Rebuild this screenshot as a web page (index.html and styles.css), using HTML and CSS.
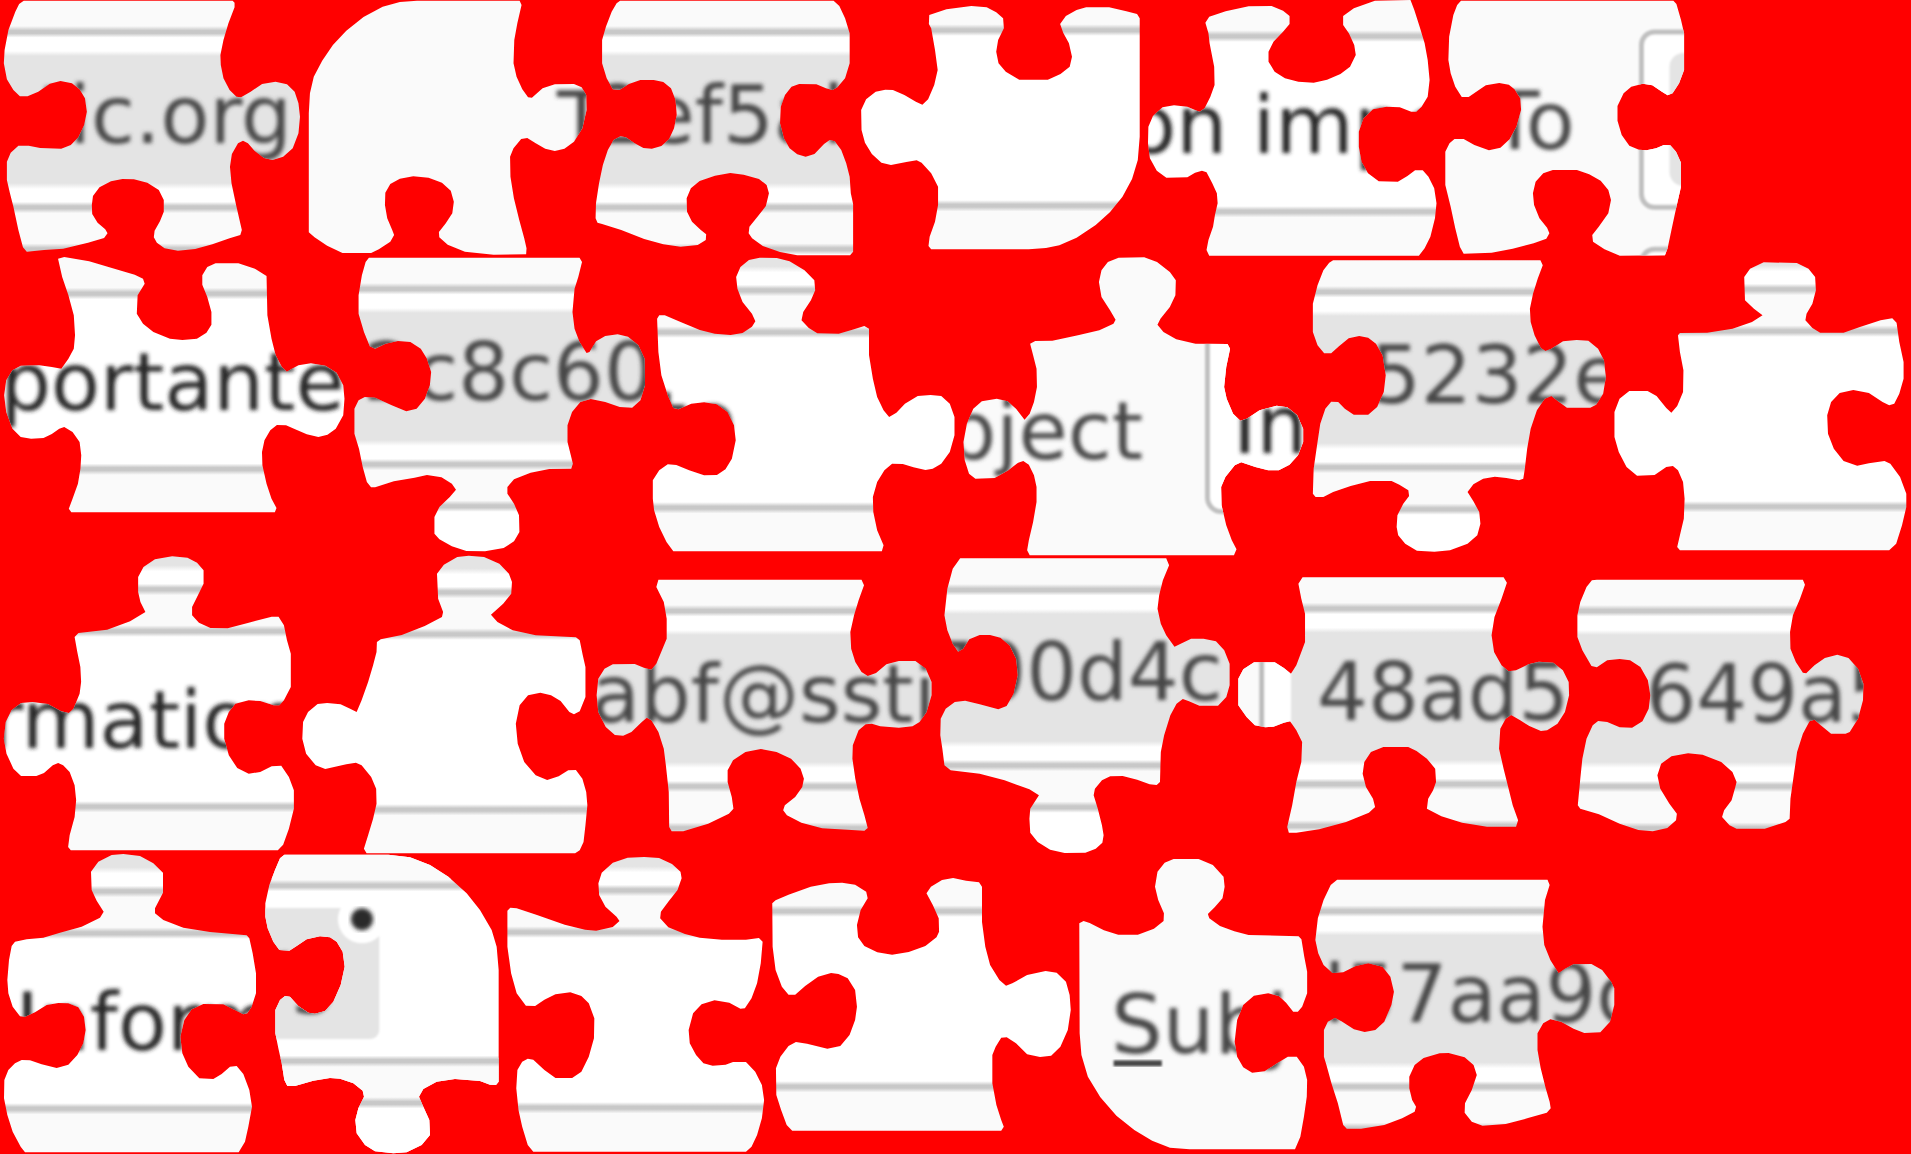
FILE: index.html
```
<!DOCTYPE html>
<html lang="en">
<head>
<meta charset="utf-8">
<title>Puzzle pieces</title>
<link rel="stylesheet" href="styles.css">
</head>
<body>
<svg class="board" width="1911" height="1154" viewBox="0 0 1911 1154">
<defs>
<filter id="soft" x="-10%" y="-10%" width="120%" height="120%"><feGaussianBlur stdDeviation="1.3"/></filter>
<filter id="softText" x="-10%" y="-10%" width="120%" height="120%"><feGaussianBlur stdDeviation="1.9"/></filter>
<linearGradient id="chipFill" gradientUnits="userSpaceOnUse" x1="0" x2="0" y1="-100" y2="300">
<stop offset=".235" stop-color="#fafafa"/><stop offset=".2465" stop-color="#c8c8c8"/><stop offset=".2535" stop-color="#c8c8c8"/><stop offset=".264" stop-color="#fff"/><stop offset=".2975" stop-color="#fff"/><stop offset=".31" stop-color="#e4e4e4"/><stop offset=".6275" stop-color="#e4e4e4"/><stop offset=".6425" stop-color="#fff"/><stop offset=".6745" stop-color="#fff"/><stop offset=".6848" stop-color="#c8c8c8"/><stop offset=".6918" stop-color="#c8c8c8"/><stop offset=".703" stop-color="#fafafa"/><stop offset=".7785" stop-color="#fafafa"/><stop offset=".7898" stop-color="#c8c8c8"/><stop offset=".7968" stop-color="#c8c8c8"/><stop offset=".807" stop-color="#fff"/>
</linearGradient>
<linearGradient id="plainFill" gradientUnits="userSpaceOnUse" x1="0" x2="0" y1="-100" y2="300">
<stop offset=".085" stop-color="#e4e4e4"/><stop offset=".1" stop-color="#fff"/><stop offset=".131" stop-color="#fff"/><stop offset=".1415" stop-color="#c8c8c8"/><stop offset=".1485" stop-color="#c8c8c8"/><stop offset=".16" stop-color="#fafafa"/><stop offset=".235" stop-color="#fafafa"/><stop offset=".2465" stop-color="#c8c8c8"/><stop offset=".2535" stop-color="#c8c8c8"/><stop offset=".264" stop-color="#fff"/><stop offset=".6745" stop-color="#fff"/><stop offset=".6848" stop-color="#c8c8c8"/><stop offset=".6918" stop-color="#c8c8c8"/><stop offset=".703" stop-color="#fafafa"/>
</linearGradient>
<rect id="chip" x="0" y="-100" width="1911" height="400" fill="url(#chipFill)"/>
<rect id="plain" x="0" y="-100" width="1911" height="400" fill="url(#plainFill)"/>

<clipPath id="a1"><polygon transform="scale(.38265 .33333)" points="62,2 608,2 613,8 613,22 597,70 584,120 576,165 577,195 584,235 600,270 618,290 630,292 655,275 685,252 720,245 750,253 770,275 780,310 784,350 780,400 765,445 740,470 712,480 690,474 665,452 648,430 635,422 622,430 606,462 601,500 605,550 617,615 626,660 632,690 628,705 600,715 555,733 510,747 465,752 430,745 410,728 402,712 404,692 418,664 428,635 428,600 415,570 385,548 350,538 320,537 290,544 260,562 243,588 240,615 241,642 255,668 275,688 281,700 272,714 230,728 165,746 115,750 70,755 60,742 48,690 35,620 26,580 18,540 18,485 28,458 48,437 75,437 105,444 160,446 185,435 205,412 220,375 227,335 222,295 208,268 188,250 158,243 130,251 100,275 72,289 52,289 35,270 18,238 10,190 12,150 22,90 40,35 50,12"/></clipPath>
<clipPath id="a2"><polygon transform="scale(.38265 .33333)" points="1090,2 1358,2 1363,15 1352,70 1344,120 1342,190 1350,230 1365,268 1380,292 1390,293 1418,265 1450,253 1500,252 1520,262 1532,285 1533,330 1522,385 1500,425 1475,446 1450,453 1425,446 1400,430 1378,414 1362,417 1342,445 1333,470 1334,530 1343,595 1357,660 1370,715 1376,745 1375,763 1290,764 1215,755 1170,734 1148,712 1147,696 1165,670 1182,640 1186,605 1178,572 1155,548 1120,533 1080,529 1045,536 1020,552 1007,578 1006,615 1012,655 1025,690 1030,705 1020,725 990,748 970,759 895,759 855,737 822,712 807,697 807,340 810,280 820,230 842,182 870,135 905,92 950,51 1000,20 1045,6"/></clipPath>
<clipPath id="a3"><polygon transform="translate(560 0) scale(.38265 .33333)" points="157,2 715,2 730,18 745,55 757,100 757,190 745,235 725,262 712,270 695,265 670,253 625,252 605,260 588,285 577,320 575,370 585,415 600,445 620,463 642,470 665,462 690,432 705,420 718,424 735,450 748,490 757,530 760,580 766,612 766,755 758,766 620,766 575,756 530,738 502,715 493,700 495,680 515,652 538,618 546,580 540,555 520,537 480,524 445,519 405,527 365,543 342,565 331,595 332,635 345,665 368,690 382,703 381,720 360,735 315,740 270,733 220,717 160,690 110,672 98,668 93,655 94,610 102,550 112,495 125,450 140,420 158,409 172,412 195,430 218,444 240,446 265,438 285,418 298,385 305,345 302,300 290,265 270,246 245,240 210,240 180,252 155,270 138,268 122,235 110,190 110,120 120,80 135,35 148,10"/></clipPath>
<clipPath id="a4"><polygon transform="translate(560 0) scale(.38265 .33333)" points="965,45 1010,28 1075,18 1115,22 1140,37 1158,55 1160,85 1145,120 1140,155 1146,190 1165,215 1200,239 1275,239 1308,222 1332,200 1338,170 1330,130 1315,98 1307,72 1322,48 1350,30 1375,22 1435,22 1480,34 1508,42 1515,55 1515,410 1510,480 1495,537 1470,590 1437,637 1400,675 1350,713 1305,736 1270,744 1225,748 970,748 963,738 966,710 980,665 988,615 988,560 970,520 945,488 932,481 905,486 865,495 840,488 815,462 797,428 788,390 787,330 800,298 825,275 850,269 870,270 900,285 930,305 947,314 962,298 978,255 987,210 980,150 970,85 964,72"/></clipPath>
<clipPath id="a5"><polygon transform="translate(1130 0) scale(.38265 .33333)" points="197,68 207,50 250,34 310,19 370,18 400,32 417,48 417,72 400,95 375,125 362,155 362,185 378,215 405,235 440,245 480,248 515,239 550,222 575,200 590,165 586,135 572,100 557,75 557,48 585,25 640,2 733,0 743,30 757,80 770,130 778,180 783,240 778,290 762,320 748,335 735,335 705,322 670,320 635,328 610,355 598,395 598,440 605,485 622,520 650,544 700,545 725,528 745,511 765,511 780,530 795,565 801,610 797,655 785,710 770,745 755,767 207,767 200,750 205,720 217,680 222,645 229,610 227,580 215,550 200,517 188,512 170,518 150,532 95,533 70,512 52,475 47,430 48,380 60,348 85,322 115,316 150,320 170,330 182,335 195,325 210,290 221,255 220,200 208,130 205,100"/></clipPath>
<clipPath id="a6"><polygon transform="translate(1130 0) scale(.38265 .33333)" points="865,2 1420,2 1428,12 1440,60 1448,100 1448,210 1435,250 1418,280 1405,286 1390,275 1365,256 1340,251 1310,260 1290,280 1274,318 1274,362 1285,405 1305,437 1330,449 1350,451 1375,445 1395,435 1412,436 1427,455 1440,488 1440,560 1428,620 1415,690 1405,745 1398,766 1280,767 1240,748 1210,725 1208,705 1225,680 1250,640 1257,600 1250,570 1230,542 1200,523 1168,510 1105,510 1080,520 1060,545 1053,580 1056,615 1070,655 1090,683 1096,700 1088,716 1055,730 1000,746 945,758 872,761 862,740 850,685 838,620 824,555 824,455 835,430 848,417 872,417 900,435 938,451 968,443 992,418 1010,380 1022,330 1020,295 1005,268 990,254 965,249 930,256 905,275 885,291 867,291 850,260 838,220 832,180 834,110 845,45 855,15"/></clipPath>
<clipPath id="b1"><polygon transform="translate(0 252) scale(.41454 .33333)" points="140,20 155,15 215,28 280,52 325,68 345,80 349,95 332,130 330,185 345,215 370,240 410,260 440,264 475,260 498,242 510,218 510,180 500,135 488,98 488,70 500,45 520,34 575,34 615,50 643,72 645,190 655,260 665,310 680,345 692,359 702,352 720,340 750,334 785,341 812,362 828,400 831,440 828,490 810,530 790,548 768,555 740,547 712,532 690,520 668,519 652,535 638,565 632,600 633,640 643,695 655,740 667,768 663,781 172,781 166,770 175,740 188,695 194,650 196,610 192,570 175,540 155,525 143,530 125,546 105,558 75,560 50,555 30,530 15,480 10,430 15,385 30,355 50,341 95,340 125,345 148,350 165,320 178,290 181,250 178,190 165,130 150,75"/></clipPath>
<clipPath id="b2"><polygon transform="translate(0 252) scale(.41454 .33333)" points="890,17 1398,17 1404,30 1395,75 1386,110 1381,180 1386,230 1398,270 1415,303 1422,300 1438,268 1460,252 1490,247 1515,254 1540,280 1555,320 1556,400 1545,445 1525,467 1495,465 1460,450 1425,441 1400,450 1380,480 1369,520 1369,570 1377,610 1382,635 1378,650 1325,651 1280,662 1240,682 1224,705 1224,725 1240,755 1252,790 1253,840 1240,868 1215,888 1170,898 1125,897 1090,883 1060,862 1048,845 1048,795 1060,765 1085,735 1100,713 1090,695 1065,676 1030,669 1000,677 950,688 905,706 895,706 885,690 875,645 866,590 855,545 855,470 865,445 880,435 905,437 945,460 980,478 1005,470 1025,440 1037,400 1040,360 1030,320 1015,290 990,270 960,267 930,275 905,290 892,283 878,240 865,185 865,130 873,70 882,30"/></clipPath>
<clipPath id="b3"><polygon transform="translate(640 252) scale(.4273 .33333)" points="40,200 45,190 58,190 95,210 140,234 175,245 212,249 240,243 262,224 270,208 262,185 240,150 228,110 225,75 235,45 255,24 280,17 320,18 350,28 385,55 408,85 410,115 400,145 382,180 378,205 395,228 415,244 465,245 495,234 525,222 536,230 536,310 545,380 555,435 570,475 583,495 600,482 620,455 650,432 680,429 705,432 725,455 736,495 736,550 725,600 705,635 685,650 668,654 640,646 615,636 590,635 572,655 555,690 545,735 546,780 555,835 570,880 566,898 78,898 62,870 45,825 33,775 30,740 30,685 45,655 65,637 85,639 115,655 150,670 180,669 200,652 215,620 224,565 220,520 205,480 180,457 150,451 120,455 90,472 78,468 65,430 50,370 43,300"/></clipPath>
<clipPath id="b4"><polygon transform="translate(640 252) scale(.4273 .33333)" points="913,275 925,267 965,266 1025,250 1075,235 1108,215 1113,203 1100,175 1080,135 1074,90 1080,55 1095,30 1120,17 1180,16 1210,30 1240,60 1254,85 1253,130 1240,165 1218,200 1211,218 1225,240 1255,262 1300,275 1375,276 1381,290 1372,345 1367,405 1373,440 1388,485 1405,506 1420,500 1450,475 1490,461 1515,466 1538,490 1552,530 1552,570 1540,610 1520,638 1495,655 1470,655 1440,645 1407,631 1392,640 1370,675 1360,705 1361,760 1372,820 1385,865 1396,892 1390,910 912,910 906,895 910,865 920,810 928,750 928,705 922,670 910,638 897,627 885,632 862,655 830,678 785,680 770,665 760,625 757,570 765,515 780,470 800,448 835,440 860,448 880,470 900,503 912,485 922,450 929,405 928,350 920,310"/></clipPath>
<clipPath id="b5"><polygon transform="translate(1300 252) scale(.38966 .33333)" points="85,25 617,25 623,40 610,80 598,125 590,170 592,210 602,250 618,288 630,297 645,290 675,268 710,264 740,266 765,290 780,325 785,375 778,425 760,458 745,467 685,467 665,450 645,432 628,440 608,475 592,530 583,590 577,650 573,680 562,685 530,678 500,674 470,680 445,697 430,720 445,748 460,780 463,815 455,850 430,875 385,895 345,899 300,896 270,875 252,850 248,825 250,790 265,755 280,732 278,715 255,698 235,687 180,687 130,702 85,720 60,735 40,735 33,725 35,650 45,570 52,515 65,470 80,449 98,450 115,470 138,488 175,488 198,465 215,420 220,370 212,310 195,275 175,257 152,252 125,259 100,283 80,304 62,304 45,280 33,240 33,155 45,100 60,55 75,32"/></clipPath>
<clipPath id="b6"><polygon transform="translate(1300 252) scale(.38966 .33333)" points="970,250 975,243 1045,242 1110,230 1160,210 1187,190 1165,170 1142,145 1140,75 1155,50 1190,31 1275,33 1305,50 1322,75 1324,115 1315,155 1300,185 1297,205 1315,228 1335,242 1395,242 1435,226 1490,205 1520,199 1531,212 1538,270 1549,330 1549,380 1538,425 1525,455 1512,460 1495,450 1460,423 1420,414 1385,423 1363,450 1353,490 1355,545 1370,590 1395,627 1430,641 1460,634 1500,627 1515,635 1540,675 1556,725 1556,765 1545,820 1530,875 1512,895 975,895 968,885 975,850 985,800 987,740 983,690 970,655 957,642 940,645 910,669 865,671 838,645 818,600 807,555 807,480 820,440 845,417 892,417 915,432 940,468 953,482 968,462 983,420 984,355 975,300"/></clipPath>
<clipPath id="c1"><polygon transform="translate(0 552) scale(.38265 .33333)" points="195,255 205,243 280,233 340,208 380,180 367,150 361,120 361,75 375,45 405,22 450,13 490,17 515,32 532,55 532,95 515,135 502,165 502,190 520,212 550,228 595,229 650,212 710,194 728,194 742,220 750,265 760,305 760,405 742,445 730,460 715,460 680,447 650,445 615,455 598,480 586,515 586,560 598,610 620,648 650,665 680,660 710,643 735,641 755,675 768,715 768,770 755,830 740,878 726,895 185,895 178,885 182,850 195,795 199,745 195,700 182,660 165,640 152,633 138,640 115,663 95,672 55,672 35,650 17,605 10,560 15,510 30,475 55,453 85,450 125,456 160,478 180,483 192,470 208,425 212,390 210,345 202,300"/></clipPath>
<clipPath id="c2"><polygon transform="translate(0 552) scale(.38265 .33333)" points="985,270 995,262 1050,249 1110,222 1155,195 1158,180 1145,140 1142,65 1160,38 1195,15 1225,11 1265,15 1305,35 1330,65 1338,90 1336,125 1315,155 1283,188 1300,210 1340,235 1400,250 1505,256 1515,265 1523,310 1530,345 1530,435 1515,478 1500,487 1488,480 1465,447 1440,430 1412,422 1380,430 1358,460 1348,515 1353,575 1370,630 1400,670 1430,684 1460,673 1485,655 1505,654 1522,680 1532,720 1535,760 1530,820 1525,870 1515,895 1503,904 958,904 951,890 962,850 975,800 984,755 983,710 970,675 945,640 930,632 905,637 850,651 825,640 800,605 790,560 792,510 805,480 830,456 855,453 890,457 915,470 932,480 945,445 962,390 975,340 984,300"/></clipPath>
<clipPath id="c3"><polygon transform="translate(590 552) scale(.41454 .33333)" points="165,83 655,83 661,100 648,145 637,190 628,240 630,290 640,330 655,360 670,372 690,363 715,337 745,327 785,327 810,350 824,390 824,430 812,480 795,510 778,523 745,527 700,523 680,515 665,517 648,535 634,580 633,620 640,680 650,740 662,790 670,828 662,836 560,829 510,812 475,790 466,775 470,760 495,735 512,705 516,680 508,650 485,620 450,600 412,591 375,600 345,625 332,655 332,690 342,735 346,770 335,785 285,815 225,838 197,838 191,825 190,720 183,640 178,590 165,540 148,505 137,497 125,510 100,540 80,551 60,549 38,525 20,480 16,430 20,380 35,350 55,337 108,336 130,347 148,353 160,335 175,290 185,260 185,200 178,150 160,105"/></clipPath>
<clipPath id="c4"><polygon transform="translate(590 552) scale(.41454 .33333)" points="893,19 1390,19 1397,40 1382,85 1373,130 1369,170 1377,215 1390,250 1410,284 1425,275 1450,260 1480,260 1510,268 1530,295 1543,335 1543,400 1535,435 1515,461 1470,461 1445,448 1430,441 1415,455 1400,490 1385,550 1377,600 1375,690 1367,699 1350,697 1320,683 1285,672 1255,673 1235,685 1218,710 1215,730 1225,770 1235,820 1239,850 1236,872 1220,890 1195,902 1145,903 1110,893 1080,870 1062,842 1060,800 1062,770 1083,730 1060,712 1000,685 940,665 870,655 855,640 850,590 845,550 846,500 858,470 880,450 905,446 940,457 985,472 1005,462 1022,425 1032,370 1028,320 1012,280 990,257 965,249 940,249 915,262 900,290 888,299 875,275 862,235 855,190 862,110 875,50"/></clipPath>
<clipPath id="c5"><polygon transform="translate(1230 552) scale(.41454 .33333)" points="175,76 660,76 668,92 655,140 638,195 631,250 637,300 655,340 672,358 690,355 720,337 745,329 780,332 803,355 817,390 818,430 808,480 790,515 765,535 750,537 722,522 700,505 678,489 665,500 652,530 649,590 660,650 670,700 682,760 695,805 690,824 620,824 560,812 510,793 475,770 478,740 490,715 497,690 495,650 475,620 450,597 430,585 370,585 340,600 324,630 320,665 328,705 345,740 350,765 335,782 280,810 215,832 160,842 142,842 138,825 150,760 160,690 172,630 174,570 160,535 145,508 130,512 105,524 85,526 60,520 40,495 20,460 20,380 32,352 58,331 108,331 130,348 147,365 160,340 175,290 181,270 181,185 172,140 165,95"/></clipPath>
<clipPath id="c6"><polygon transform="translate(1230 552) scale(.41454 .33333)" points="885,83 1382,83 1387,98 1375,140 1358,190 1351,240 1352,290 1365,330 1382,362 1390,364 1410,340 1435,318 1465,308 1492,318 1515,350 1528,395 1527,445 1515,500 1495,540 1485,545 1450,545 1425,520 1410,503 1398,508 1382,545 1368,600 1360,670 1352,740 1350,800 1340,810 1290,830 1222,830 1205,820 1187,795 1192,775 1210,745 1219,705 1222,690 1212,660 1185,630 1140,608 1105,604 1065,613 1040,635 1031,670 1038,710 1060,755 1078,785 1076,805 1055,828 1020,838 985,834 940,815 890,787 845,770 839,760 845,680 850,620 860,560 875,520 888,507 910,510 940,526 970,527 995,508 1010,470 1014,430 1008,385 990,345 965,325 940,321 910,325 885,346 872,342 850,295 838,255 838,190 845,150 860,105 873,85"/></clipPath>
<clipPath id="d1"><polygon transform="translate(0 850) scale(.33333)" points="35,288 45,275 80,268 130,263 180,248 245,230 300,203 311,185 290,152 275,120 273,65 295,35 335,15 370,12 420,18 460,40 489,68 489,128 465,175 465,190 490,210 550,233 630,246 740,256 748,265 758,310 768,370 768,430 755,470 742,490 730,493 705,480 670,463 610,462 575,478 553,510 541,560 547,610 565,650 598,685 640,687 665,672 690,650 710,648 730,672 748,720 756,770 745,830 735,875 716,907 75,907 62,890 38,845 22,795 12,745 13,690 25,660 45,640 65,630 90,631 125,643 170,654 205,644 232,615 250,580 257,540 252,500 235,472 205,460 175,459 140,465 105,487 75,500 60,499 38,470 25,430 22,390 27,330"/></clipPath>
<clipPath id="d2"><polygon transform="translate(0 850) scale(.33333)" points="853,14 1165,14 1230,22 1290,45 1345,80 1400,130 1440,180 1475,240 1490,290 1496,360 1496,695 1488,705 1470,704 1440,693 1365,687 1310,695 1270,717 1257,740 1270,770 1288,810 1290,855 1265,885 1220,907 1180,910 1125,904 1095,885 1070,850 1066,810 1075,775 1092,740 1088,722 1060,700 1020,686 990,684 940,692 885,708 862,708 853,690 845,640 835,595 826,550 826,480 840,450 855,438 870,440 895,468 925,488 945,491 975,483 1000,455 1022,405 1034,350 1028,305 1010,275 990,262 960,259 920,268 890,288 868,302 838,300 820,275 803,235 796,200 796,160 808,105 825,60 840,25"/></clipPath>
<clipPath id="d3"><polygon transform="translate(500 850) scale(.3699 .33333)" points="20,182 28,173 45,175 100,195 175,224 230,239 260,242 305,231 323,213 315,200 285,170 268,135 266,100 275,68 305,38 345,23 390,21 430,24 465,42 488,65 491,85 480,120 455,155 435,185 433,205 455,232 500,252 540,263 600,269 665,269 700,264 710,275 705,340 695,400 680,445 662,475 650,476 620,458 580,451 545,463 522,490 510,540 513,580 530,615 550,640 575,647 610,644 630,636 665,636 690,665 708,705 714,750 708,805 695,855 680,890 665,905 90,905 75,885 60,830 50,780 44,715 47,660 60,635 75,626 90,629 120,660 150,684 195,684 220,665 240,620 254,565 255,505 240,460 220,438 190,427 150,433 120,449 95,468 70,467 45,430 30,370 20,290"/></clipPath>
<clipPath id="d4"><polygon transform="translate(500 850) scale(.3699 .33333)" points="736,160 745,151 780,134 840,110 890,100 925,98 960,104 990,125 994,145 975,180 965,225 968,262 985,288 1020,307 1060,314 1105,306 1150,288 1180,262 1187,245 1186,205 1170,165 1153,130 1165,110 1195,90 1225,84 1260,92 1295,97 1303,110 1303,215 1312,290 1325,345 1350,390 1368,407 1385,400 1425,375 1475,363 1505,368 1530,395 1540,435 1543,480 1535,540 1515,590 1490,617 1460,621 1425,613 1395,580 1370,562 1355,563 1340,590 1331,615 1331,700 1342,765 1355,810 1362,830 1355,842 790,842 775,825 760,780 747,735 746,655 758,620 780,588 800,576 830,581 885,596 920,588 945,555 960,510 965,470 960,420 940,385 915,372 895,369 860,380 825,408 798,434 780,434 762,410 745,360 737,290"/></clipPath>
<clipPath id="d5"><polygon transform="translate(1070 850) scale(.35714 .33333)" points="26,220 38,213 55,219 95,241 135,254 190,254 235,236 262,213 263,190 247,150 238,110 245,65 265,38 290,27 360,27 400,45 430,80 433,110 427,145 405,172 386,192 390,205 420,228 460,244 500,255 640,259 648,268 656,320 664,365 664,430 650,470 638,485 625,485 605,458 585,438 555,430 515,437 485,465 468,510 461,575 468,620 485,652 510,668 545,664 580,640 610,620 635,620 655,650 664,690 663,740 655,800 645,860 630,898 335,898 280,893 230,872 180,840 130,797 85,742 50,680 32,615 27,550"/></clipPath>
<clipPath id="d6"><polygon transform="translate(1070 850) scale(.35714 .33333)" points="748,89 1337,89 1343,105 1330,150 1323,230 1328,285 1345,330 1368,370 1385,357 1410,343 1460,342 1490,360 1515,395 1524,415 1524,465 1512,515 1485,547 1440,549 1410,536 1375,515 1345,508 1325,520 1309,550 1309,600 1318,655 1332,715 1343,755 1346,775 1335,788 1280,805 1220,822 1155,827 1125,815 1105,788 1106,760 1125,720 1139,675 1130,645 1105,622 1060,609 1035,610 990,624 965,645 950,680 950,715 958,750 969,770 965,785 930,805 880,825 815,836 775,836 765,825 750,760 732,700 718,645 711,620 711,540 722,515 742,504 760,514 795,538 825,546 855,540 880,515 900,465 907,425 897,380 875,350 835,340 800,348 765,367 735,369 710,345 695,310 687,270 694,205 710,150 730,105"/></clipPath>
</defs>

<!-- first row -->
<g clip-path="url(#a1)"><use href="#chip" y="32"/><text class="tag" x="37.5" y="143.3">tic.org</text></g>
<g clip-path="url(#a2)"><rect class="paper" x="300" width="300" height="260"/><text class="label" x="557" y="149">T</text></g>
<g clip-path="url(#a3)"><use href="#chip" y="32"/><text class="tag" x="594.6" y="143.3">2ef5ab</text></g>
<g clip-path="url(#a4)"><use href="#plain" y="30.3"/></g>
<g clip-path="url(#a5)"><use href="#plain" y="36.3"/><text class="value wide" x="1127" y="153.3">on impo</text></g>
<g clip-path="url(#a6)">
<rect class="paper" x="1400" width="300" height="260"/>
<g class="soft"><rect class="field" x="1641.5" y="32" width="300" height="175.3" rx="13"/><rect class="field" x="1641.5" y="249.3" width="300" height="175.3" rx="13"/><rect class="fill" x="1669.5" y="53" width="200" height="133" rx="14"/></g>
<text class="label" x="1490.5" y="149">To</text></g>

<!-- second row -->
<g clip-path="url(#b1)"><use href="#plain" y="293.7"/><text class="value" x=".3" y="409.7">portante</text></g>
<g clip-path="url(#b2)"><use href="#chip" y="289"/><text class="tag" x="363.3" y="399.7">2c8c60</text></g>
<g clip-path="url(#b3)"><use href="#plain" y="332.3"/><text class="value" x="655.4" y="449">te</text></g>
<g clip-path="url(#b4)">
<rect class="paper" x="940" y="240" width="400" height="320"/>
<g class="soft"><rect class="field" x="1207.5" y="294" width="300" height="217.5" rx="14"/></g>
<text class="label" x="945.5" y="458.7">bject</text><text class="value" x="1233" y="453">In</text></g>
<g clip-path="url(#b5)"><use href="#chip" y="292"/><text class="tag" x="1369.9" y="402.7">5232e</text></g>
<g clip-path="url(#b6)"><use href="#plain" y="331.3"/></g>

<!-- third row -->
<g clip-path="url(#c1)"><use href="#plain" y="631.3"/><text class="value" x="-9.8" y="747.7">rmation</text></g>
<g clip-path="url(#c2)"><use href="#plain" y="634.3"/></g>
<g clip-path="url(#c3)"><use href="#chip" y="611"/><text class="tag" x="591" y="722">abf@ssti</text></g>
<g clip-path="url(#c4)"><use href="#chip" y="590"/><text class="tag" x="924.4" y="700.3">700d4c</text></g>
<g clip-path="url(#c5)"><use href="#chip" y="608.7"/>
<g class="soft"><rect class="white" x="1220" y="655" width="71" height="80"/><rect class="paper" x="1220" y="650" width="41.5" height="90"/><rect class="edge" x="1259.2" y="640" width="5" height="100"/></g>
<text class="tag" x="1317" y="719.7">48ad5</text></g>
<g clip-path="url(#c6)"><use href="#chip" y="611"/><text class="tag" x="1645.4" y="722">649a5</text></g>

<!-- fourth row -->
<g clip-path="url(#d1)"><use href="#plain" y="933.3"/><text class="value" x="15.5" y="1050">Inform</text></g>
<g clip-path="url(#d2)"><use href="#plain" y="885.7"/>
<rect class="paper" x="260" y="854" width="240" height="25"/>
<g class="soft"><rect class="fill" x="200" y="908" width="179.3" height="131" rx="9"/><circle class="white" cx="362" cy="919.3" r="24"/></g>
<g transform="translate(0 885.7)"><rect x="260" y="172" width="240" height="100" fill="url(#chipFill)"/></g>
<circle class="dot" cx="362" cy="919.3" r="11"/><text class="tag" x="255.5" y="997">rg</text></g>
<g clip-path="url(#d3)"><use href="#plain" y="932.3"/></g>
<g clip-path="url(#d4)"><use href="#plain" y="911.3"/></g>
<g clip-path="url(#d5)"><rect class="paper" x="1070" y="850" width="250" height="304"/><text class="label wider" x="1111" y="1052.7">Subj</text><rect class="underline" x="1113.6" y="1060.3" width="48.2" height="6"/></g>
<g clip-path="url(#d6)"><use href="#chip" y="911.3"/><text class="tag" x="1294.8" y="1022.3">d57aa9d</text></g>
</svg>
</body>
</html>
```
FILE: styles.css
```
body {
  margin: 0;
  background: #f00;
  overflow: hidden;
}

.board {
  display: block;
}

.tag,
.label,
.value {
  font-family: "DejaVu Sans", sans-serif;
  font-size: 80px;
  filter: url(#softText);
}

.tag { fill: #464646; }
.label { fill: #464646; }
.value { fill: #262626; }
.wide { font-size: 80.5px; }
.wider { font-size: 81.5px; }

.soft { filter: url(#soft); }
.paper { fill: #fafafa; }
.white { fill: #fff; }
.fill { fill: #e4e4e4; }
.edge { fill: #bcbcbc; }

.field {
  fill: #fff;
  stroke: #c0c0c0;
  stroke-width: 5px;
}

.dot {
  fill: #2b2b2b;
  filter: url(#softText);
}

.underline {
  fill: #464646;
  filter: url(#soft);
}
```
